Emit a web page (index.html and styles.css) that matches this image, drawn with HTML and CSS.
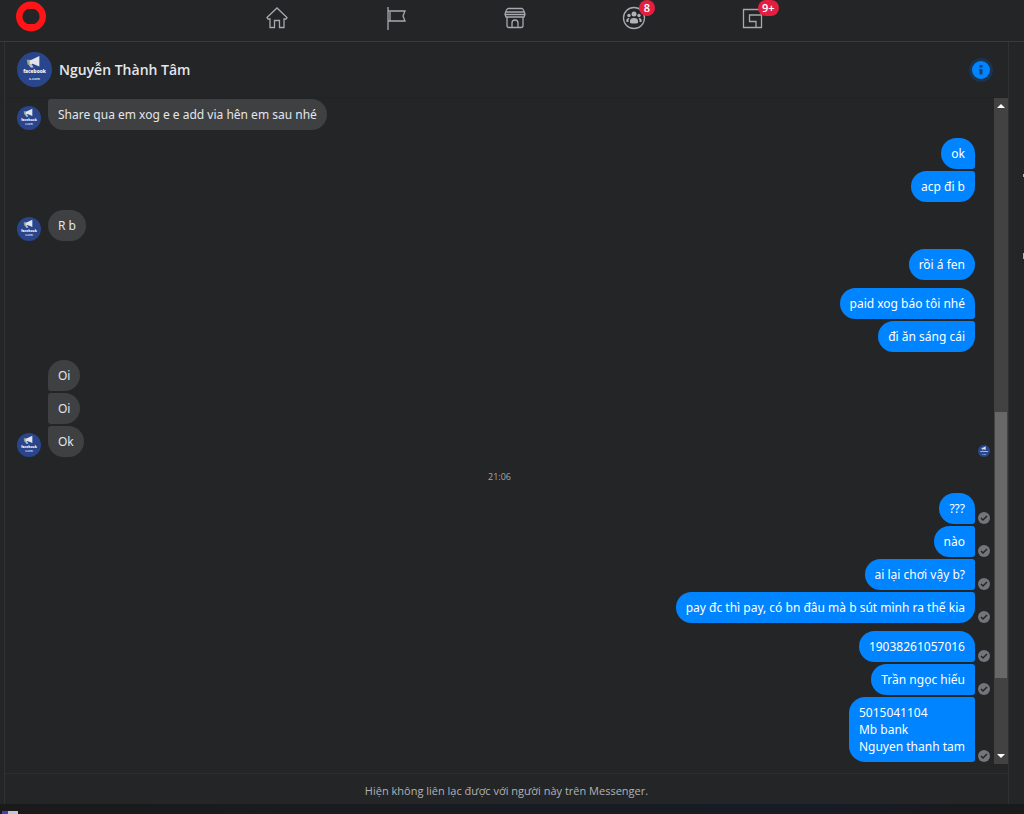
FILE: index.html
```
<!DOCTYPE html>
<html lang="vi">
<head>
  <meta charset="UTF-8">
  <meta name="viewport" content="width=device-width, initial-scale=1.0">
  <title>Messenger</title>
  <link rel="stylesheet" href="styles.css">
</head>
<body>
  <svg class="defs" aria-hidden="true">
    <symbol id="avatar" viewBox="0 0 36 36" overflow="visible">
      <circle cx="18" cy="18" r="18" fill="#29468d"/>
      <path d="M11 9l4-1 8-4v11l-7-3-4 1z" fill="#dfe5ea"/>
      <path d="M12 13l3-1 2 4h-3z" fill="#b9c3cf"/>
      <path d="M10 8l3 0v5l-2 0z" fill="#98a68c"/>
      <text x="18" y="22" text-anchor="middle" font-size="5" font-weight="800" fill="#fff">facebook</text>
      <text x="18" y="29" text-anchor="middle" font-size="4" font-weight="700" fill="#cdd6ec">s.com</text>
    </symbol>
    <symbol id="check" viewBox="0 0 12 12">
      <circle cx="6" cy="6" r="6" fill="#72767a"/>
      <path d="M3 6l2 2 4-4" fill="none" stroke="#242526" stroke-width="1.5"/>
    </symbol>
  </svg>

  <header class="topbar">
    <a class="logo" href="#" aria-label="Logo">
      <svg width="32" height="32" viewBox="0 0 32 32"><path fill="#ff1418" fill-rule="evenodd" d="M16 1.500a15 15 0 1 0 0 30a15 15 0 1 0 0-30zM12.500 9h7q5 2.500 5 7.500t-5 7.500h-7q-5-2.500-5-7.500t5-7.500z"/></svg>
    </a>
    <nav class="nav">
      <a href="#" aria-label="Home">
        <svg width="24" height="24" viewBox="0 0 24 24"><path d="M2 11.500L12 2l10 9.500-1 1.500h-2v8.500h-4.500v-7h-5v7H5V13H3z"/></svg>
      </a>
      <a href="#" aria-label="Pages">
        <svg width="24" height="24" viewBox="0 0 24 24"><path d="M4 1v23M6 6v9M4 5h17l-2 5 2 5H4"/></svg>
      </a>
      <a href="#" aria-label="Marketplace">
        <svg width="24" height="24" viewBox="0 0 24 24"><path d="M5 2.500h14q2 1 3 6l-1 2.500H3L2 8.500q1-5 3-6zM3 6h18M2 8.500h20M4 11v8.500q0 2 2 2h12q2 0 2-2V11M9 21.500V17q0-3 3-3t3 3v4.500"/></svg>
      </a>
      <a href="#" aria-label="Groups">
        <svg width="24" height="24" viewBox="0 0 24 24"><circle cx="12" cy="12" r="10.500"/><g fill="#b0b3b8" stroke="none"><circle cx="12" cy="8" r="2.500"/><circle cx="7" cy="9.500" r="1.700"/><circle cx="17" cy="9.500" r="1.700"/><path d="M8 17v-2q0-3 4-3t4 3v2q-4 1-8 0zM4.500 16q-1-4 3-4-1.500 2-1 4zM19.500 16q1-4-3-4 1.500 2 1 4z"/></g></svg>
        <span class="badge">8</span>
      </a>
      <a href="#" aria-label="Gaming">
        <svg width="24" height="24" viewBox="0 0 24 24"><path d="M20.500 8V3.500h-18v18h12.500v-6H8.500V9h12v12.500H15"/></svg>
        <span class="badge">9+</span>
      </a>
    </nav>
  </header>

  <main class="chat">
    <div class="chat-header">
      <svg class="avatar-lg"><use href="#avatar"/></svg>
      <h1>Nguyễn Thành Tâm</h1>
      <button class="info" type="button" aria-label="Info">
        <svg width="24" height="24" viewBox="0 0 24 24"><circle cx="12" cy="12" r="12" fill="#1b3450"/><circle cx="12" cy="12" r="9" fill="#0084ff"/><path d="M10.500 7h3v2.500h-3zM10 11h3.500v5.500h-3V12.500H10z" fill="#17426f"/></svg>
      </button>
    </div>

    <div class="chat-body">
      <div class="messages">
        <div class="group received">
          <div class="row"><svg class="avatar"><use href="#avatar"/></svg><p class="bubble last">Share qua em xog e e add via hên em sau nhé</p></div>
        </div>
        <div class="group sent">
          <div class="row"><p class="bubble first">ok</p><span class="status"></span></div>
          <div class="row"><p class="bubble last">acp đi b</p><span class="status"></span></div>
        </div>
        <div class="group received">
          <div class="row"><svg class="avatar"><use href="#avatar"/></svg><p class="bubble">R b</p></div>
        </div>
        <div class="group sent">
          <div class="row"><p class="bubble">rồi á fen</p><span class="status"></span></div>
        </div>
        <div class="group sent">
          <div class="row"><p class="bubble first">paid xog báo tôi nhé</p><span class="status"></span></div>
          <div class="row"><p class="bubble last">đi ăn sáng cái</p><span class="status"></span></div>
        </div>
        <div class="group received">
          <div class="row"><span class="avatar"></span><p class="bubble first">Oi</p></div>
          <div class="row"><span class="avatar"></span><p class="bubble middle">Oi</p></div>
          <div class="row"><svg class="avatar"><use href="#avatar"/></svg><p class="bubble last">Ok</p><svg class="status seen"><use href="#avatar"/></svg></div>
        </div>
        <time class="time">21:06</time>
        <div class="group sent">
          <div class="row"><p class="bubble first">???</p><svg class="status"><use href="#check"/></svg></div>
          <div class="row"><p class="bubble middle">nào</p><svg class="status"><use href="#check"/></svg></div>
          <div class="row"><p class="bubble middle">ai lại chơi vậy b?</p><svg class="status"><use href="#check"/></svg></div>
          <div class="row"><p class="bubble last">pay đc thì pay, có bn đâu mà b sút mình ra thế kia</p><svg class="status"><use href="#check"/></svg></div>
        </div>
        <div class="group sent">
          <div class="row"><p class="bubble first">19038261057016</p><svg class="status"><use href="#check"/></svg></div>
          <div class="row"><p class="bubble middle">Trần ngọc hiếu</p><svg class="status"><use href="#check"/></svg></div>
          <div class="row"><p class="bubble middle">5015041104<br>Mb bank<br>Nguyen thanh tam</p><svg class="status"><use href="#check"/></svg></div>
        </div>
      </div>
      <div class="scrollbar">
        <svg width="14" height="16" viewBox="0 0 14 16"><path d="M3 10l4-4 4 4z" fill="#fff"/></svg>
        <div class="track"><div class="thumb"></div></div>
        <svg width="14" height="16" viewBox="0 0 14 16"><path d="M3 6l4 4 4-4z" fill="#fff"/></svg>
      </div>
    </div>

    <footer class="notice">Hiện không liên lạc được với người này trên Messenger.</footer>
  </main>

  <div class="taskbar"><span class="task-icon"></span></div>
</body>
</html>
```
FILE: styles.css
```
* {
  box-sizing: border-box;
}

body {
  margin: 0;
  min-height: 100vh;
  display: flex;
  flex-direction: column;
  background-color: #242526;
  color: #e4e6eb;
  font-family: "Noto Sans", "Open Sans", sans-serif;
  font-size: 12px;
  line-height: 17px;
}

svg {
  display: block;
  flex: none;
}

.defs {
  position: absolute;
  width: 0;
  height: 0;
  overflow: visible;
}

/* top navigation */
.topbar {
  display: grid;
  grid-template-columns: 1fr 595px 1fr;
  height: 42px;
  padding: 0 10px 0 15px;
  border-bottom: 1px solid #393a3b;
}

.logo {
  width: 32px;
}

.nav {
  display: flex;
}

.nav a {
  position: relative;
  flex: 1;
  display: flex;
  justify-content: center;
  padding-top: 6px;
}

.nav svg {
  fill: none;
  stroke: #a6a9ad;
  stroke-width: 1.3;
}

.badge {
  position: absolute;
  top: 0;
  left: 65px;
  min-width: 16px;
  height: 16px;
  padding: 0 4px;
  border-radius: 8px;
  background-color: #e41e3f;
  color: #fff;
  font-size: 11px;
  font-weight: 600;
  line-height: 16px;
  text-align: center;
}

.nav a:hover svg {
  stroke: #e4e6eb;
}

/* conversation */
.chat {
  position: relative;
  flex: 1;
  display: flex;
  flex-direction: column;
  margin: 0 15px 0 4px;
  border: solid #303132;
  border-width: 0 1px;
}

/* clipped edge of the next panel */
.chat::before,
.chat::after {
  content: "";
  position: absolute;
  right: -16px;
  width: 1px;
  height: 3px;
  background-color: #b0b3b8;
}

.chat::before {
  top: 132px;
}

.chat::after {
  top: 211px;
  height: 6px;
}

.chat-header {
  display: flex;
  align-items: center;
  height: 56px;
  padding: 0 15px 0 12px;
  border-bottom: 1px solid #212223;
}

.avatar-lg {
  width: 35px;
  height: 35px;
}

h1 {
  flex: 1;
  margin: 0 0 0 7px;
  font-family: "Open Sans", sans-serif;
  font-size: 14px;
  font-weight: 600;
  line-height: 20px;
}

.info {
  padding: 0;
  border: none;
  background: none;
  cursor: pointer;
}

.chat-body {
  flex: 1;
  display: flex;
  margin-bottom: 9px;
}

.messages {
  flex: 1;
  display: flex;
  flex-direction: column;
  gap: 8px;
  padding: 1px 4px 0 12px;
}

.group {
  display: flex;
  flex-direction: column;
  gap: 2px;
}

.row {
  display: flex;
  align-items: flex-end;
}

.sent .row {
  justify-content: flex-end;
}

.avatar {
  width: 24px;
  height: 24px;
  margin-right: 7px;
}

.bubble {
  margin: 0;
  padding: 7px 10px;
  border-radius: 16px;
}

.received .bubble {
  background-color: #3e4042;
}

.sent .bubble {
  background-color: #0084ff;
  color: #fff;
}

.received .first {
  border-bottom-left-radius: 3px;
}

.received .middle {
  border-top-left-radius: 3px;
  border-bottom-left-radius: 3px;
}

.received .last {
  border-top-left-radius: 3px;
}

.sent .first {
  border-bottom-right-radius: 3px;
}

.sent .middle {
  border-top-right-radius: 3px;
  border-bottom-right-radius: 3px;
}

.sent .last {
  border-top-right-radius: 3px;
}

.status {
  width: 12px;
  height: 12px;
  margin-left: 3px;
}

.seen {
  margin-left: auto;
}

.time {
  padding: 3px 8px 0 0;
  color: #a4a7ab;
  font-family: "Open Sans", sans-serif;
  font-size: 9px;
  text-align: center;
}

/* scrollbar */
.scrollbar {
  display: flex;
  flex-direction: column;
  width: 14px;
  background-color: #424242;
}

.track {
  flex: 1;
  display: flex;
  flex-direction: column;
  padding: 0 1px;
}

.track::before {
  content: "";
  flex: 298;
}

.track::after {
  content: "";
  flex: 70;
}

.thumb {
  flex: 266;
  background-color: #686868;
}

.notice {
  height: 31px;
  padding-top: 8px;
  border-top: 1px solid #2c2d2e;
  color: #b0b3b8;
  font-family: "Open Sans", sans-serif;
  font-size: 11px;
  text-align: center;
}

.taskbar {
  display: flex;
  align-items: flex-end;
  height: 10px;
  padding-left: 2px;
  background: linear-gradient(to right, #1a1a1b, #191b20 40%, #171b24 80%, #1a1a1b);
}

.task-icon {
  width: 16px;
  height: 3px;
  border-left: 6px solid #4442a8;
  background-color: #c4c4d4;
}
```
